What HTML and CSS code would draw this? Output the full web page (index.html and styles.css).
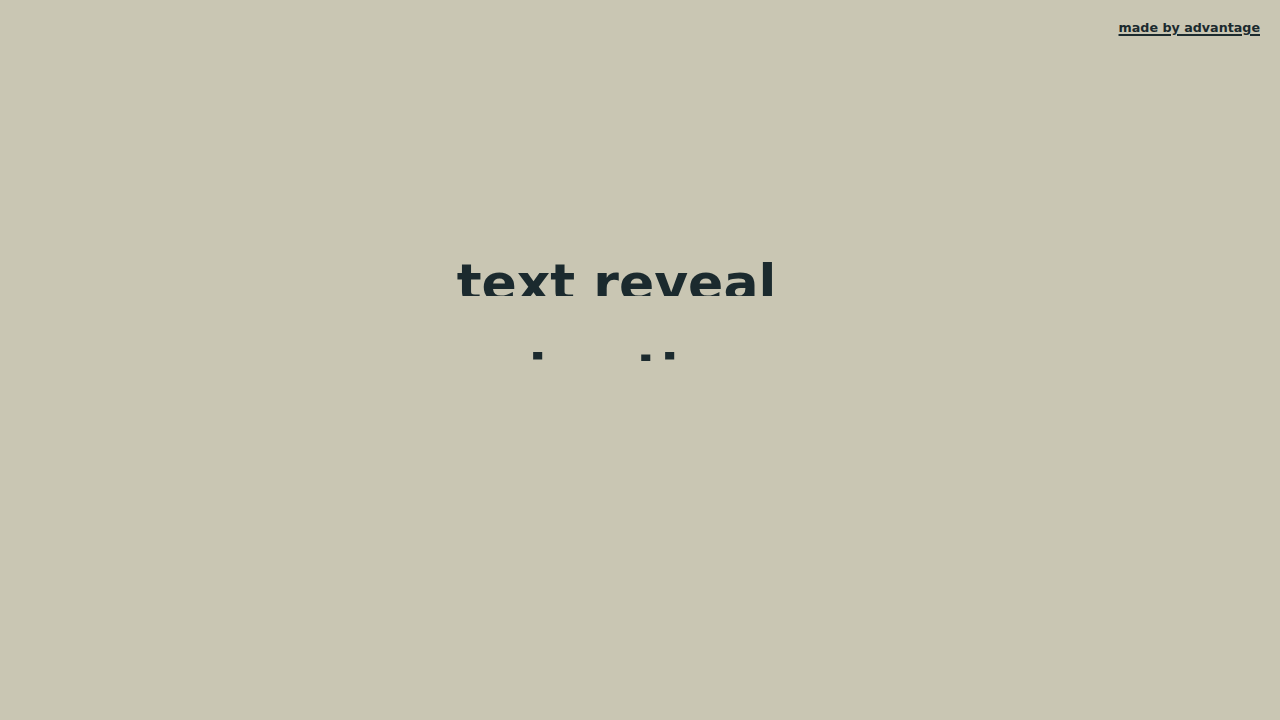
FILE: index.html
```html
<!DOCTYPE html>
<html lang="en">
<head>
<meta charset="utf-8">
<title>text reveal animation</title>
<link rel="stylesheet" href="styles.css">
</head>
<body>
  <header class="top">
    <a class="credit" href="#">made by advantage</a>
  </header>
  <main class="stage">
    <h1 class="title">
      <span class="mask"><span class="line line-1">text reveal</span></span>
      <span class="mask"><span class="line line-2">animation</span></span>
    </h1>
  </main>
</body>
</html>
```
FILE: styles.css
```css
html, body {
  margin: 0;
  padding: 0;
}
body {
  background: #c9c6b3;
  color: #1b2a2e;
  font-family: "DejaVu Sans", "Liberation Sans", sans-serif;
  height: 720px;
  overflow: hidden;
}
.top {
  display: flex;
  justify-content: flex-end;
  padding: 20px 20px 0 20px;
  height: 34px;
}
.credit {
  font-size: 12.7px;
  font-weight: 700;
  color: #1b2a2e;
  text-decoration: underline;
  text-decoration-thickness: 1.5px;
  text-underline-offset: 1.5px;
  line-height: normal;
}
.stage {
  display: flex;
  justify-content: center;
  margin-top: 177px;
}
.title {
  margin: 0 47px 0 0;
  font-size: 52px;
  font-weight: 700;
  letter-spacing: 0;
}
.mask {
  display: block;
  height: 65px;
  overflow: hidden;
}
.line {
  display: block;
  line-height: 65px;
  white-space: nowrap;
}
.line-1 {
  transform: translateY(20px);
}
.line-2 {
  transform: translateY(44.5px);
}
```
